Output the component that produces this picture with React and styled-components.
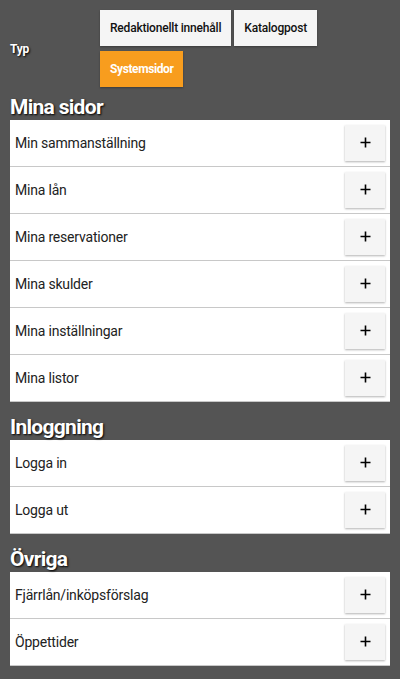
import React from "react";
import styled, { createGlobalStyle } from "styled-components";

const Global = createGlobalStyle`
  html, body { margin: 0; padding: 0; background: #545454; }
  body { font-family: Roboto, "Liberation Sans", sans-serif; }
  * { box-sizing: border-box; }
`;

const Page = styled.div`
  padding: 10px 10px 14px;
  min-height: 679px;
  background: #545454;
`;

const FilterRow = styled.div`
  display: flex;
  align-items: center;
`;

const FilterLabel = styled.div`
  width: 90px;
  color: #fff;
  font-weight: 700;
  font-size: 12px;
  letter-spacing: -0.3px;
  text-shadow: 1px 1px 2px #000;
`;

const ButtonGroup = styled.div`
  display: flex;
  flex-wrap: wrap;
  gap: 5px 3px;
  width: 240px;
`;

const FilterButton = styled.button`
  height: 36px;
  padding: 0 10px;
  border: none;
  font-family: inherit;
  font-size: 12px;
  font-weight: ${(p) => (p.$active ? 700 : 500)};
  color: ${(p) => (p.$active ? "#fff" : "#111")};
  background: ${(p) => (p.$active ? "#f89d1e" : "#f5f5f5")};
  box-shadow: 0 1px 2px rgba(0, 0, 0, 0.3);
  letter-spacing: ${(p) => (p.$active ? "-0.4px" : "-0.2px")};
`;

const Section = styled.section`
  margin-top: ${(p) => (p.$first ? "5px" : "10px")};
`;

const Heading = styled.h2`
  margin: 0;
  height: 28px;
  line-height: 30px;
  color: #fff;
  font-size: 21px;
  font-weight: 700;
  letter-spacing: -0.7px;
  text-shadow: 1px 1px 2px #000;
`;

const Panel = styled.div`
  background: #fff;
`;

const Row = styled.div`
  display: flex;
  align-items: center;
  justify-content: space-between;
  height: 47px;
  padding: 0 5px;
  border-bottom: 1px solid #c8c8c8;
`;

const RowLabel = styled.span`
  color: #222;
  font-size: 14px;
  letter-spacing: -0.2px;
`;

const AddButton = styled.button`
  width: 40px;
  height: 36px;
  margin-top: -1px;
  border: none;
  background: #f5f5f5;
  box-shadow: 0 1px 2px rgba(0, 0, 0, 0.3);
  display: flex;
  align-items: center;
  justify-content: center;
  padding: 0;
`;

const Plus = () => (
  <svg width="11" height="11" viewBox="0 0 11 11">
    <path d="M5.5 0.5v10M0.5 5.5h10" stroke="#000" strokeWidth="1.6" />
  </svg>
);

const sections = [
  {
    title: "Mina sidor",
    items: [
      "Min sammanställning",
      "Mina lån",
      "Mina reservationer",
      "Mina skulder",
      "Mina inställningar",
      "Mina listor",
    ],
  },
  { title: "Inloggning", items: ["Logga in", "Logga ut"] },
  { title: "Övriga", items: ["Fjärrlån/inköpsförslag", "Öppettider"] },
];

export default function App() {
  return (
    <>
      <Global />
      <Page>
        <FilterRow>
          <FilterLabel>Typ</FilterLabel>
          <ButtonGroup>
            <FilterButton>Redaktionellt innehåll</FilterButton>
            <FilterButton>Katalogpost</FilterButton>
            <FilterButton $active>Systemsidor</FilterButton>
          </ButtonGroup>
        </FilterRow>
        {sections.map((s, i) => (
          <Section key={s.title} $first={i === 0}>
            <Heading>{s.title}</Heading>
            <Panel>
              {s.items.map((it) => (
                <Row key={it}>
                  <RowLabel>{it}</RowLabel>
                  <AddButton aria-label="Lägg till">
                    <Plus />
                  </AddButton>
                </Row>
              ))}
            </Panel>
          </Section>
        ))}
      </Page>
    </>
  );
}
